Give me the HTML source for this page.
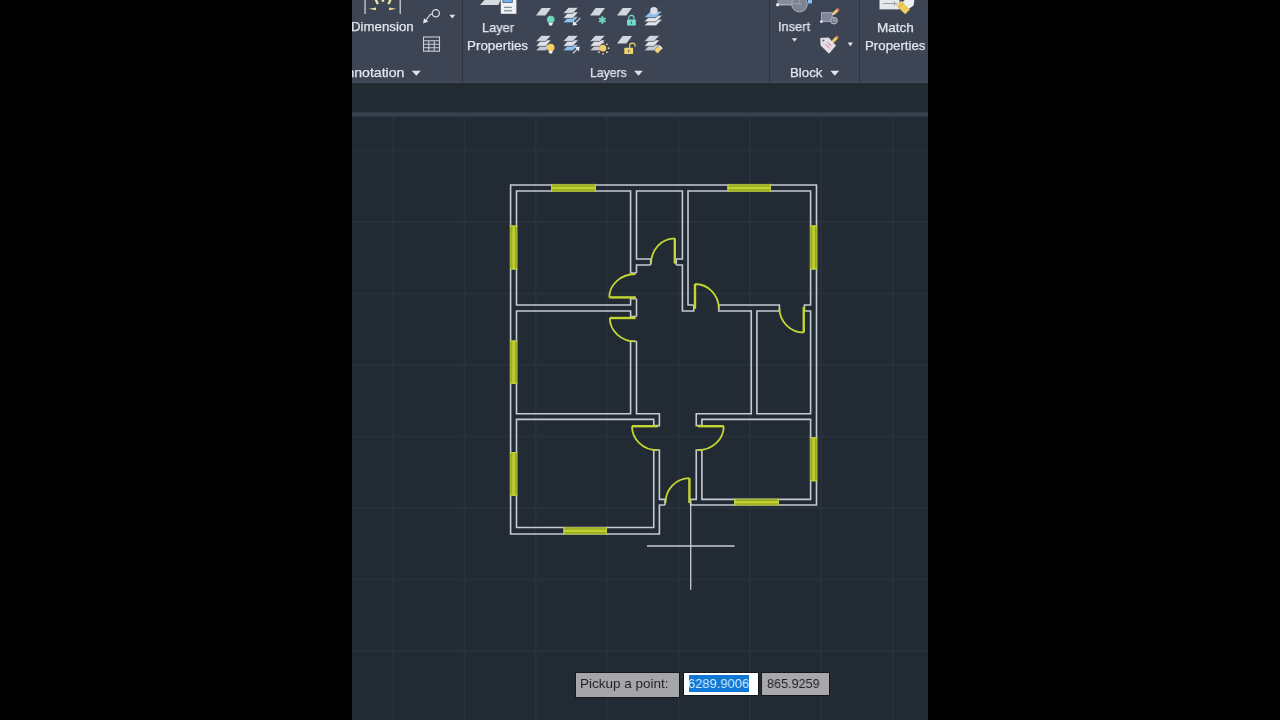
<!DOCTYPE html>
<html><head><meta charset="utf-8"><title>AutoCAD</title>
<style>
html,body{margin:0;padding:0;background:#000;}
body{width:1280px;height:720px;overflow:hidden;position:relative;font-family:"Liberation Sans",sans-serif;}
#app{position:absolute;left:352px;top:0;width:576px;height:720px;background:#222a33;overflow:hidden;}
#ribbon{position:absolute;left:0;top:0;width:576px;height:83px;background:#3d4454;border-bottom:0;box-sizing:border-box;}
#band{position:absolute;left:0;top:83px;width:576px;height:30px;background:#222a32;}
#bar{position:absolute;left:0;top:112px;width:576px;height:5px;background:linear-gradient(#2c343e,#38414d 30%,#38414d 70%,#2c343e);}
.t{will-change:transform;position:absolute;white-space:nowrap;color:#e3e6ed;-webkit-text-stroke:0.25px #e3e6ed;font-size:13px;line-height:16px;transform-origin:0 0;}
.sep{position:absolute;top:0;width:1px;height:82px;background:#2d323e;}
#svg{position:absolute;left:0;top:0;}
.pb{position:absolute;box-sizing:border-box;border:1px solid #14181d;}
.pt{will-change:transform;position:absolute;white-space:nowrap;font-size:13.5px;line-height:16px;transform-origin:0 0;}
</style></head><body>
<div id="app">
 <div id="ribbon"></div>
 <div style="position:absolute;left:0;top:80px;width:576px;height:3px;background:linear-gradient(#3d4454,#434a5a);"></div>
 <div id="band"></div>
 <div id="bar"></div>
</div>
<svg id="svg" width="1280" height="720" viewBox="0 0 1280 720">
<rect x="392.1" y="117" width="1.8" height="603" fill="#29323c"/>
<rect x="463.49" y="117" width="1.8" height="603" fill="#29323c"/>
<rect x="534.88" y="117" width="1.8" height="603" fill="#29323c"/>
<rect x="606.27" y="117" width="1.8" height="603" fill="#29323c"/>
<rect x="677.66" y="117" width="1.8" height="603" fill="#29323c"/>
<rect x="749.05" y="117" width="1.8" height="603" fill="#29323c"/>
<rect x="820.44" y="117" width="1.8" height="603" fill="#29323c"/>
<rect x="891.83" y="117" width="1.8" height="603" fill="#29323c"/>
<rect x="352" y="149.6" width="576" height="1.8" fill="#29323c"/>
<rect x="352" y="221.1" width="576" height="1.8" fill="#29323c"/>
<rect x="352" y="292.6" width="576" height="1.8" fill="#29323c"/>
<rect x="352" y="364.1" width="576" height="1.8" fill="#29323c"/>
<rect x="352" y="435.6" width="576" height="1.8" fill="#29323c"/>
<rect x="352" y="507.1" width="576" height="1.8" fill="#29323c"/>
<rect x="352" y="578.6" width="576" height="1.8" fill="#29323c"/>
<rect x="352" y="650.1" width="576" height="1.8" fill="#29323c"/>
<polyline points="665,505 659.4,505 659.4,534 510.6,534 510.6,185 816.5,185 816.5,505 690.6,505" fill="none" stroke="#c6cad2" stroke-width="1.6" />
<polyline points="636.5,273 630.6,273 630.6,191 516.5,191 516.5,305 630.6,305 630.6,298.75 636.5,298.75" fill="none" stroke="#c6cad2" stroke-width="1.6" />
<polyline points="650.6,265 650.6,259 636.5,259 636.5,191 682.4,191 682.4,259 676.25,259 676.25,265" fill="none" stroke="#c6cad2" stroke-width="1.6" />
<polyline points="650.6,265 636.5,265 636.5,273" fill="none" stroke="#c6cad2" stroke-width="1.6" />
<polyline points="636.5,298.75 636.5,316.5" fill="none" stroke="#c6cad2" stroke-width="1.6" />
<polyline points="636.5,341.25 636.5,413.75 659.4,413.75 659.4,425.6 653.75,425.6" fill="none" stroke="#c6cad2" stroke-width="1.6" />
<polyline points="653.75,450 659.4,450 659.4,499.4 665,499.4 665,505" fill="none" stroke="#c6cad2" stroke-width="1.6" />
<polyline points="690.6,505 690.6,499.4 696.25,499.4 696.25,450 701.9,450" fill="none" stroke="#c6cad2" stroke-width="1.6" />
<polyline points="701.9,425.6 696.25,425.6 696.25,413.75 751.25,413.75 751.25,311 718.75,311 718.75,305" fill="none" stroke="#c6cad2" stroke-width="1.6" />
<polyline points="693.75,305 693.75,311 682.4,311 682.4,265 676.25,265" fill="none" stroke="#c6cad2" stroke-width="1.6" />
<polyline points="693.75,305 688,305 688,191 810.6,191 810.6,305 804.4,305 804.4,311" fill="none" stroke="#c6cad2" stroke-width="1.6" />
<polyline points="718.75,305 779.4,305 779.4,311" fill="none" stroke="#c6cad2" stroke-width="1.6" />
<polyline points="636.5,316.5 630.6,316.5 630.6,311 516.5,311 516.5,413.75 630.6,413.75 630.6,341.25 636.5,341.25" fill="none" stroke="#c6cad2" stroke-width="1.6" />
<polyline points="653.75,425.6 653.75,419.4 516.5,419.4 516.5,527.5 653.75,527.5 653.75,450" fill="none" stroke="#c6cad2" stroke-width="1.6" />
<polyline points="779.4,311 756.9,311 756.9,413.75 810.6,413.75 810.6,311 804.4,311" fill="none" stroke="#c6cad2" stroke-width="1.6" />
<polyline points="701.9,425.6 701.9,419.4 810.6,419.4 810.6,499.4 701.9,499.4 701.9,450" fill="none" stroke="#c6cad2" stroke-width="1.6" />
<rect x="551" y="183.9" width="45" height="8.1" fill="#a3b430"/><rect x="551" y="186.05" width="45" height="3.8" fill="#8b9d16"/><rect x="551" y="186.65" width="45" height="2.6" fill="#c0d130"/><rect x="551" y="183.9" width="1.2" height="8.1" fill="#bccd50"/><rect x="594.8" y="183.9" width="1.2" height="8.1" fill="#bccd50"/>
<rect x="727.5" y="183.9" width="43.5" height="8.1" fill="#a3b430"/><rect x="727.5" y="186.05" width="43.5" height="3.8" fill="#8b9d16"/><rect x="727.5" y="186.65" width="43.5" height="2.6" fill="#c0d130"/><rect x="727.5" y="183.9" width="1.2" height="8.1" fill="#bccd50"/><rect x="769.8" y="183.9" width="1.2" height="8.1" fill="#bccd50"/>
<rect x="509.9" y="225.6" width="7.4" height="43.8" fill="#a3b430"/><rect x="511.7" y="225.6" width="3.8" height="43.8" fill="#8b9d16"/><rect x="512.3" y="225.6" width="2.6" height="43.8" fill="#c0d130"/><rect x="509.9" y="225.6" width="7.4" height="1.2" fill="#bccd50"/><rect x="509.9" y="268.2" width="7.4" height="1.2" fill="#bccd50"/>
<rect x="509.9" y="340.6" width="7.4" height="43.15" fill="#a3b430"/><rect x="511.7" y="340.6" width="3.8" height="43.15" fill="#8b9d16"/><rect x="512.3" y="340.6" width="2.6" height="43.15" fill="#c0d130"/><rect x="509.9" y="340.6" width="7.4" height="1.2" fill="#bccd50"/><rect x="509.9" y="382.55" width="7.4" height="1.2" fill="#bccd50"/>
<rect x="509.9" y="452" width="7.4" height="43.7" fill="#a3b430"/><rect x="511.7" y="452" width="3.8" height="43.7" fill="#8b9d16"/><rect x="512.3" y="452" width="2.6" height="43.7" fill="#c0d130"/><rect x="509.9" y="452" width="7.4" height="1.2" fill="#bccd50"/><rect x="509.9" y="494.5" width="7.4" height="1.2" fill="#bccd50"/>
<rect x="809.9" y="225.5" width="7.4" height="43.9" fill="#a3b430"/><rect x="811.7" y="225.5" width="3.8" height="43.9" fill="#8b9d16"/><rect x="812.3" y="225.5" width="2.6" height="43.9" fill="#c0d130"/><rect x="809.9" y="225.5" width="7.4" height="1.2" fill="#bccd50"/><rect x="809.9" y="268.2" width="7.4" height="1.2" fill="#bccd50"/>
<rect x="809.9" y="437.3" width="7.4" height="43.9" fill="#a3b430"/><rect x="811.7" y="437.3" width="3.8" height="43.9" fill="#8b9d16"/><rect x="812.3" y="437.3" width="2.6" height="43.9" fill="#c0d130"/><rect x="809.9" y="437.3" width="7.4" height="1.2" fill="#bccd50"/><rect x="809.9" y="480" width="7.4" height="1.2" fill="#bccd50"/>
<rect x="563.5" y="527.1" width="43.4" height="7.5" fill="#a3b430"/><rect x="563.5" y="528.95" width="43.4" height="3.8" fill="#8b9d16"/><rect x="563.5" y="529.55" width="43.4" height="2.6" fill="#c0d130"/><rect x="563.5" y="527.1" width="1.2" height="7.5" fill="#bccd50"/><rect x="605.7" y="527.1" width="1.2" height="7.5" fill="#bccd50"/>
<rect x="734.3" y="498.7" width="44.4" height="7" fill="#a3b430"/><rect x="734.3" y="500.3" width="44.4" height="3.8" fill="#8b9d16"/><rect x="734.3" y="500.9" width="44.4" height="2.6" fill="#c0d130"/><rect x="734.3" y="498.7" width="1.2" height="7" fill="#bccd50"/><rect x="777.5" y="498.7" width="1.2" height="7" fill="#bccd50"/>
<path d="M609.3 297.4 L635.8 297.4" fill="none" stroke="#c5d632" stroke-width="2.4" stroke-linecap="butt"/><path d="M609.3 297.4 A26.2 23.4 0 0 1 635.5 274" fill="none" stroke="#c5d632" stroke-width="1.8" stroke-linecap="butt"/>
<path d="M674.8 238.4 L674.8 263.6" fill="none" stroke="#c5d632" stroke-width="2.4" stroke-linecap="butt"/><path d="M674.8 238.4 A23.7 25 0 0 0 651.1 263.4" fill="none" stroke="#c5d632" stroke-width="1.8" stroke-linecap="butt"/>
<path d="M695 284 L695 308.8" fill="none" stroke="#c5d632" stroke-width="2.4" stroke-linecap="butt"/><path d="M695 284 A23.8 24.5 0 0 1 718.8 308.4" fill="none" stroke="#c5d632" stroke-width="1.8" stroke-linecap="butt"/>
<path d="M609.8 318 L635.6 318" fill="none" stroke="#c5d632" stroke-width="2.4" stroke-linecap="butt"/><path d="M609.8 318 A25.6 23.4 0 0 0 635.4 341.4" fill="none" stroke="#c5d632" stroke-width="1.8" stroke-linecap="butt"/>
<path d="M803.75 307 L803.75 332.5" fill="none" stroke="#c5d632" stroke-width="2.4" stroke-linecap="butt"/><path d="M779.4 308 A24.35 24.5 0 0 0 803.75 332.5" fill="none" stroke="#c5d632" stroke-width="1.8" stroke-linecap="butt"/>
<path d="M632 426.2 L658 426.2" fill="none" stroke="#c5d632" stroke-width="2.4" stroke-linecap="butt"/><path d="M632 426.2 A25 23.9 0 0 0 657 450.1" fill="none" stroke="#c5d632" stroke-width="1.8" stroke-linecap="butt"/>
<path d="M698 426.2 L723.75 426.2" fill="none" stroke="#c5d632" stroke-width="2.4" stroke-linecap="butt"/><path d="M723.75 426.2 A25.7 23.9 0 0 1 698 450.1" fill="none" stroke="#c5d632" stroke-width="1.8" stroke-linecap="butt"/>
<path d="M689.4 478.2 L689.4 503" fill="none" stroke="#c5d632" stroke-width="2.4" stroke-linecap="butt"/><path d="M689.4 478.2 A23.9 24.8 0 0 0 665.5 503" fill="none" stroke="#c5d632" stroke-width="1.8" stroke-linecap="butt"/>
<line x1="647" y1="546" x2="734.5" y2="546" stroke="#c9cdd4" stroke-width="1.3"/>
<line x1="690.7" y1="502.5" x2="690.7" y2="589.7" stroke="#c9cdd4" stroke-width="1.3"/>
<g id="ribbon-icons">
<!-- dimension icon (cropped) -->
<rect x="364.3" y="0" width="1.5" height="14" fill="#b7bcc8"/>
<rect x="399.5" y="0" width="1.5" height="14" fill="#b7bcc8"/>
<path d="M368.9 8.8 L376 7.4 L376 10.2 Z" fill="#f0e09a"/>
<path d="M396.4 8.8 L389 7.4 L389 10.2 Z" fill="#f2d58a"/>
<path d="M374.6 0 L377.2 0 L379 3.8 L376.8 4.6 Z" fill="#ece2a2"/>
<path d="M391.6 0 L389 0 L387.3 3.8 L389.5 4.6 Z" fill="#ece2a2"/>
<rect x="381.6" y="0" width="2.6" height="1.8" fill="#ece2a2"/>
<!-- leader icon -->
<circle cx="435.8" cy="13.2" r="3.6" fill="none" stroke="#d5d9e2" stroke-width="1.3"/>
<path d="M432.4 14.2 L430 14.6 L425.8 20.6" fill="none" stroke="#c5cad4" stroke-width="1.2"/>
<path d="M423 23.6 L424 18.2 L428.4 21.4 Z" fill="#dfe3ea"/>
<path d="M449.4 14.8 L455.2 14.8 L452.3 18.6 Z" fill="#dfe3ea"/>
<!-- table icon -->
<g fill="none" stroke="#c9ced8" stroke-width="1.1">
<rect x="423.5" y="37" width="16" height="14.2"/>
<path d="M423.5 40.8 H439.5 M423.5 44.3 H439.5 M423.5 47.7 H439.5 M428.8 40.8 V51.2 M434.2 40.8 V51.2"/>
</g>
<!-- layer properties icon (cropped) -->
<path d="M484.5 0 L500.8 0 L498.4 5 L480 5 Z" fill="#d6dae1"/>
<rect x="500.8" y="0" width="15.6" height="13.8" fill="#eef0f3"/>
<rect x="502.9" y="-1" width="9.4" height="3.5" fill="#6cb2f0" stroke="#3e4f68" stroke-width="0.7"/>
<path d="M504 7.3 H511.8 M504 10.8 H511.8" stroke="#6d727e" stroke-width="1" fill="none"/>
</g>

<polygon points="541.60,7.90 551.00,7.90 545.40,15.40 536.00,15.40" fill="#d2d6de"/>
<circle cx="550.7" cy="19.6" r="3.8" fill="#6dd6bd"/><path d="M548.5 23 h4.4 l-0.9 2.6 h-2.6 Z" fill="#eef0f4"/>
<polygon points="568.50,16.40 578.50,16.40 572.90,22.80 562.90,22.80" fill="#8cc0ea" stroke="#3d4454" stroke-width="0.7"/><polygon points="568.50,11.90 578.50,11.90 572.90,18.30 562.90,18.30" fill="#dfe2e8" stroke="#3d4454" stroke-width="0.7"/><polygon points="568.50,7.40 578.50,7.40 572.90,13.40 562.90,13.40" fill="#d2d6de" stroke="#3d4454" stroke-width="0.7"/>
<path d="M580.4 17.9 L575 23.3" stroke="#c9cdd6" stroke-width="1.3" fill="none"/><path d="M572.6 25.6 L573.4 20.9 L577.4 24.8 Z" fill="#eef0f4"/>
<polygon points="595.60,7.90 605.00,7.90 599.40,15.40 590.00,15.40" fill="#d2d6de"/>
<line x1="602.30" y1="16.10" x2="602.30" y2="23.90" stroke="#6dd6bd" stroke-width="1.5"/><line x1="605.68" y1="18.05" x2="598.92" y2="21.95" stroke="#6dd6bd" stroke-width="1.5"/><line x1="605.68" y1="21.95" x2="598.92" y2="18.05" stroke="#6dd6bd" stroke-width="1.5"/><circle cx="602.3" cy="20" r="2.5" fill="none" stroke="#6dd6bd" stroke-width="1"/>
<polygon points="622.60,7.90 632.00,7.90 626.40,15.40 617.00,15.40" fill="#d2d6de"/>
<rect x="627" y="19.4" width="8.8" height="6.2" rx="0.6" fill="#74dbd3"/><rect x="630.75" y="21.4" width="1.3" height="2.4" fill="#3c4252" opacity="0.75"/><path d="M628.8 19.6 v-1.6 a2.6 2.6 0 0 1 5.2 0 v1.6" fill="none" stroke="#74dbd3" stroke-width="1.15"/>
<polygon points="650.40,19.20 662.40,19.20 656.00,25.80 644.00,25.80" fill="#e4e6ec" stroke="#3d4454" stroke-width="0.7"/><polygon points="650.40,15.20 662.40,15.20 656.00,21.80 644.00,21.80" fill="#e4e6ec" stroke="#3d4454" stroke-width="0.7"/><polygon points="650.40,11.20 662.40,11.20 656.00,17.60 644.00,17.60" fill="#8cc0ea" stroke="#3d4454" stroke-width="0.7"/>
<circle cx="653.9" cy="10.7" r="3.7" fill="#d9dde6"/>
<polygon points="541.30,44.40 551.30,44.40 545.70,50.80 535.70,50.80" fill="#c3c8d2" stroke="#3d4454" stroke-width="0.7"/><polygon points="541.30,39.90 551.30,39.90 545.70,46.30 535.70,46.30" fill="#dfe2e8" stroke="#3d4454" stroke-width="0.7"/><polygon points="541.30,35.40 551.30,35.40 545.70,41.40 535.70,41.40" fill="#d2d6de" stroke="#3d4454" stroke-width="0.7"/>
<circle cx="550.7" cy="47.5" r="3.8" fill="#f4cf62"/><path d="M548.5 50.9 h4.4 l-0.9 2.6 h-2.6 Z" fill="#eef0f4"/>
<polygon points="568.50,44.40 578.50,44.40 572.90,50.80 562.90,50.80" fill="#8cc0ea" stroke="#3d4454" stroke-width="0.7"/><polygon points="568.50,39.90 578.50,39.90 572.90,46.30 562.90,46.30" fill="#dfe2e8" stroke="#3d4454" stroke-width="0.7"/><polygon points="568.50,35.40 578.50,35.40 572.90,41.40 562.90,41.40" fill="#d2d6de" stroke="#3d4454" stroke-width="0.7"/>
<path d="M573 53.3 L577.4 48.9" stroke="#c9cdd6" stroke-width="1.3" fill="none"/><path d="M579.6 46.4 L579 51.4 L574.8 47.3 Z" fill="#eef0f4"/>
<polygon points="595.30,44.40 605.30,44.40 599.70,50.80 589.70,50.80" fill="#c3c8d2" stroke="#3d4454" stroke-width="0.7"/><polygon points="595.30,39.90 605.30,39.90 599.70,46.30 589.70,46.30" fill="#dfe2e8" stroke="#3d4454" stroke-width="0.7"/><polygon points="595.30,35.40 605.30,35.40 599.70,41.40 589.70,41.40" fill="#d2d6de" stroke="#3d4454" stroke-width="0.7"/>
<circle cx="603" cy="48.2" r="3.3" fill="#f4cf62"/><circle cx="608.60" cy="48.20" r="0.85" fill="#f1dc9c"/><circle cx="606.96" cy="52.16" r="0.85" fill="#f1dc9c"/><circle cx="603.00" cy="53.80" r="0.85" fill="#f1dc9c"/><circle cx="599.04" cy="52.16" r="0.85" fill="#f1dc9c"/><circle cx="597.40" cy="48.20" r="0.85" fill="#f1dc9c"/><circle cx="599.04" cy="44.24" r="0.85" fill="#f1dc9c"/><circle cx="603.00" cy="42.60" r="0.85" fill="#f1dc9c"/><circle cx="606.96" cy="44.24" r="0.85" fill="#f1dc9c"/>
<polygon points="622.60,36.00 632.00,36.00 626.40,43.50 617.00,43.50" fill="#d2d6de"/>
<rect x="624.3" y="47.8" width="8.8" height="6.2" rx="0.6" fill="#f0d36c"/><rect x="628.05" y="49.8" width="1.3" height="2.4" fill="#3c4252" opacity="0.75"/><path d="M629.7 48 v-2.2 a2.7 2.7 0 0 1 5.4 0 v1" fill="none" stroke="#f0d36c" stroke-width="1.15"/>
<polygon points="649.70,44.40 659.70,44.40 654.10,50.80 644.10,50.80" fill="#c3c8d2" stroke="#3d4454" stroke-width="0.7"/><polygon points="649.70,39.90 659.70,39.90 654.10,46.30 644.10,46.30" fill="#dfe2e8" stroke="#3d4454" stroke-width="0.7"/><polygon points="649.70,35.40 659.70,35.40 654.10,41.40 644.10,41.40" fill="#d2d6de" stroke="#3d4454" stroke-width="0.7"/>
<g transform="translate(657.9 49.8) rotate(45)"><rect x="-2.3" y="-2.6" width="4.6" height="5.4" fill="#efd468"/><rect x="-2.3" y="-4.6" width="4.6" height="2" fill="#eef0f4"/></g>
<g id="block-icons">
<!-- insert icon (cropped) -->
<rect x="777.4" y="0" width="24.6" height="5" fill="#878d9d"/>
<rect x="777.4" y="4.4" width="24.6" height="1" fill="#b9bec9"/>
<circle cx="799.5" cy="4.2" r="7.8" fill="#7d8393" stroke="#a6acb8" stroke-width="1"/><path d="M792 3.8 H802 M799.6 0 V5" stroke="#9fa5b2" stroke-width="0.8" fill="none"/>
<rect x="776.2" y="3.4" width="2.8" height="2.8" fill="#eef0f4"/>
<rect x="808" y="0" width="4" height="3.4" fill="#86c0f2"/>
<path d="M791.8 38.2 L797.2 38.2 L794.5 41.8 Z" fill="#dfe3ea"/>
<!-- create/edit block icon -->
<rect x="821.4" y="12.6" width="10.8" height="9" fill="#80869a" stroke="#a9aebb" stroke-width="0.9"/>
<rect x="820.2" y="20.4" width="2.4" height="2.4" fill="#eef0f4"/>
<circle cx="834" cy="20.6" r="3.4" fill="#7a8092" stroke="#b4b9c6" stroke-width="1"/>
<path d="M834 20.6 V17.8 M834 20.6 H836.2" stroke="#b4b9c6" stroke-width="0.8" fill="none"/>
<g transform="translate(835.2 12.2) rotate(45)"><rect x="-1.5" y="-3.2" width="3" height="5.4" fill="#f0cc62"/><rect x="-1.5" y="-4.8" width="3" height="1.8" fill="#e86a6a"/><path d="M-1.5 2.2 L1.5 2.2 L0 4.4 Z" fill="#e8e0d0"/></g>
<!-- attribute tag icon -->
<path d="M820.2 38 L828.6 37.4 L836 45.6 L829 53.8 L820.6 45.4 Z" fill="#e4dde6"/>
<circle cx="823.4" cy="40.6" r="1.1" fill="#6d7383"/>
<path d="M825.4 44.2 L829.6 48.4 M827.8 42.4 L831.4 46.2" stroke="#c56a78" stroke-width="0.9" fill="none"/>
<g transform="translate(834.6 39.8) rotate(45)"><rect x="-1.5" y="-3.2" width="3" height="5.4" fill="#f0cc62"/><rect x="-1.5" y="-4.8" width="3" height="1.8" fill="#e86a6a"/><path d="M-1.5 2.2 L1.5 2.2 L0 4.4 Z" fill="#e8e0d0"/></g>
<path d="M847.6 42.6 L853 42.6 L850.3 46.2 Z" fill="#dfe3ea"/>
<!-- match properties icon (cropped) -->
<rect x="879.5" y="0" width="20" height="9.4" fill="#e6e8ec"/>
<path d="M883 3.5 H897 M894.4 1.4 V5.6" stroke="#9096a2" stroke-width="0.9" fill="none"/>
<path d="M904.6 0 L914.4 0 L913.6 5.6 L908.6 9 L902 2.6 Z" fill="#eef0f4"/>
<g transform="translate(903 7.4) rotate(-45)"><rect x="-3.4" y="-6" width="6.8" height="12.4" fill="#f0cc62"/><rect x="-3.4" y="-3.2" width="6.8" height="1" fill="#d9b24a"/></g>
<rect x="517" y="1" width="252.5" height="1" fill="#394050"/>
<!-- group arrows -->
<path d="M411.8 70.8 L420.8 70.8 L416.3 75.8 Z" fill="#dfe3ea"/>
<path d="M634.2 70.8 L642.8 70.8 L638.5 75.8 Z" fill="#dfe3ea"/>
<path d="M830.4 70.8 L839.2 70.8 L834.8 75.8 Z" fill="#dfe3ea"/>
</g>

</svg>
<div id="txt" style="position:absolute;left:352px;top:0;width:576px;height:720px;overflow:hidden;">
<div class="t" style="left:-1px;top:19.3px;transform:scaleX(1.02);">Dimension</div>
<div class="t" style="left:130px;top:19.5px;transform:scaleX(0.98);">Layer</div>
<div class="t" style="left:114.8px;top:37.5px;transform:scaleX(1.03);">Properties</div>
<div class="t" style="left:-15.1px;top:65.1px;transform:scaleX(1.085);">Annotation</div>
<div class="t" style="left:238px;top:65.4px;transform:scaleX(0.94);">Layers</div>
<div class="t" style="left:425.8px;top:19px;transform:scaleX(0.985);">Insert</div>
<div class="t" style="left:438.4px;top:65.4px;transform:scaleX(1.02);">Block</div>
<div class="t" style="left:525px;top:19.5px;transform:scaleX(1.04);">Match</div>
<div class="t" style="left:513.2px;top:37.5px;transform:scaleX(1.02);">Properties</div>
<div class="sep" style="left:110px;"></div>
<div class="sep" style="left:417.3px;"></div>
<div class="sep" style="left:507.3px;"></div>
<!-- dynamic input -->
<div class="pb" style="left:223.4px;top:672.4px;width:104.6px;height:25.8px;background:#a6a6a9;"></div>
<div class="pt" style="left:227.8px;top:676.3px;color:#1f2227;transform:scaleX(0.995);">Pickup a point:</div>
<div class="pb" style="left:331.2px;top:672.4px;width:75.4px;height:23.6px;background:#ffffff;"></div>
<div style="position:absolute;left:336.5px;top:674.7px;width:60.3px;height:17.3px;background:#0f78d7;"></div>
<div class="pt" style="left:335.9px;top:676.3px;color:#d4eaff;transform:scaleX(0.96);">6289.9006</div>
<div class="pb" style="left:409.4px;top:672.4px;width:68.6px;height:23.6px;background:#a8a8ab;"></div>
<div class="pt" style="left:415.2px;top:676.3px;color:#1f2227;transform:scaleX(0.935);">865.9259</div>
</div>

</body></html>
